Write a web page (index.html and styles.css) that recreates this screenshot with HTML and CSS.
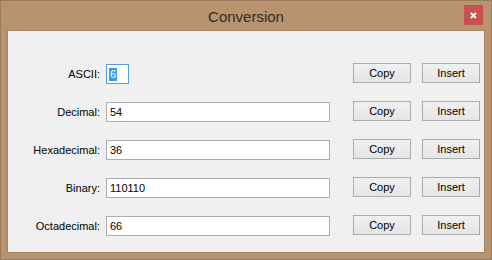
FILE: index.html
```html
<!DOCTYPE html>
<html lang="en">
<head>
  <meta charset="UTF-8" />
  <title>Conversion</title>
  <link rel="stylesheet" href="styles.css">
</head>
<body>
  <div class="window">
    <div class="titlebar">
      <span></span>
      <span class="title">Conversion</span>
      <span class="close">
        <svg width="7" height="7" viewBox="0 0 7 7">
          <path d="M1 1 L6 6 M6 1 L1 6" stroke="#fff" stroke-width="1.8" />
        </svg>
      </span>
    </div>

    <div class="client">
      <div class="row">
        <label>ASCII:</label>
        <div class="field small focused"><span class="sel">6</span></div>
        <button class="copy">Copy</button>
        <button class="insert">Insert</button>
      </div>

      <div class="row">
        <label>Decimal:</label>
        <input class="field" type="text" value="54" />
        <button class="copy">Copy</button>
        <button class="insert">Insert</button>
      </div>

      <div class="row">
        <label>Hexadecimal:</label>
        <input class="field" type="text" value="36" />
        <button class="copy">Copy</button>
        <button class="insert">Insert</button>
      </div>

      <div class="row">
        <label>Binary:</label>
        <input class="field" type="text" value="110110" />
        <button class="copy">Copy</button>
        <button class="insert">Insert</button>
      </div>

      <div class="row">
        <label>Octadecimal:</label>
        <input class="field" type="text" value="66" />
        <button class="copy">Copy</button>
        <button class="insert">Insert</button>
      </div>
    </div>
  </div>
</body>
</html>
```

FILE: styles.css
```css
body {
  margin: 0;
  font-family: "Liberation Sans", Arial, sans-serif;
  font-size: 11px;
  color: #000;
}
.window {
  width: 492px;
  height: 260px;
  box-sizing: border-box;
  background-color: #b9936f;
  border: 1px solid #9a7a5c;
  overflow: hidden;
}
.titlebar {
  height: 29px;
  display: grid;
  grid-template-columns: 1fr auto 1fr;
  align-items: center;
}
.title {
  font-family: "Liberation Sans", Arial, sans-serif;
  font-size: 15px;
  color: #332b24;
  margin-top: 1px;
}
.close {
  justify-self: end;
  align-self: start;
  margin-top: 4px;
  margin-right: 8px;
  width: 19px;
  height: 20px;
  background-color: #c75050;
  display: flex;
  align-items: center;
  justify-content: center;
}
.client {
  margin: 0 6px;
  height: 188px;
  background-color: #f0f0f0;
  border: 1px solid #a3845f;
  padding-top: 33px;
  display: flex;
  flex-direction: column;
  gap: 18px;
}
.row {
  display: flex;
  align-items: center;
  height: 20px;
}
.row label {
  width: 92px;
  text-align: right;
  margin-right: 6px;
}
.field {
  width: 224px;
  height: 20px;
  box-sizing: border-box;
  border: 1px solid #abadb3;
  background: #fff;
  padding: 0 3px;
  font-family: "Liberation Sans", Arial, sans-serif;
  font-size: 11px;
  color: #000;
  outline: none;
  margin: 0;
}
.field.small {
  width: 23px;
  display: flex;
  align-items: center;
  padding: 0 2px;
}
.field.focused {
  border-color: #569de5;
}
.sel {
  background-color: #3399ff;
  color: #fff;
  line-height: 13px;
  padding: 0 1px;
}
button {
  width: 58px;
  height: 20px;
  margin-top: -3px;
  padding: 0;
  border: 1px solid #acacac;
  background: linear-gradient(#f0f0f0, #e5e5e5);
  font-family: "Liberation Sans", Arial, sans-serif;
  font-size: 11px;
  color: #000;
}
.copy {
  margin-left: 23px;
}
.insert {
  margin-left: 11px;
}
.row .field.small + .copy {
  margin-left: 224px;
}
```
